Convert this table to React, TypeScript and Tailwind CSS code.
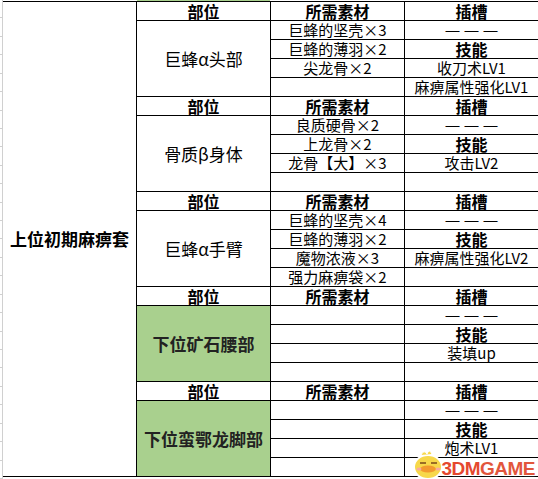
import * as React from "react"

type Group = {
  name: string
  green: boolean
  mats: string[]
  slots: string[]
}

const groups: Group[] = [
  {
    name: "巨蜂α头部",
    green: false,
    mats: ["巨蜂的坚壳×3", "巨蜂的薄羽×2", "尖龙骨×2", ""],
    slots: ["———", "技能", "收刀术LV1", "麻痹属性强化LV1"],
  },
  {
    name: "骨质β身体",
    green: false,
    mats: ["良质硬骨×2", "上龙骨×2", "龙骨【大】×3", ""],
    slots: ["———", "技能", "攻击LV2", ""],
  },
  {
    name: "巨蜂α手臂",
    green: false,
    mats: ["巨蜂的坚壳×4", "巨蜂的薄羽×2", "魔物浓液×3", "强力麻痹袋×2"],
    slots: ["———", "技能", "麻痹属性强化LV2", ""],
  },
  {
    name: "下位矿石腰部",
    green: true,
    mats: ["", "", "", ""],
    slots: ["———", "技能", "装填up", ""],
  },
  {
    name: "下位蛮鄂龙脚部",
    green: true,
    mats: ["", "", "", ""],
    slots: ["———", "技能", "炮术LV1", ""],
  },
]

const cell = "flex items-center justify-center whitespace-nowrap leading-[18px]"

function Dashes({ text }: { text: string }) {
  return (
    <div className={`${cell} bg-white gap-[5px] font-['Liberation_Sans',sans-serif] text-[14px]`}>
      {text.split("").map((d, i) => (
        <span key={i}>{d}</span>
      ))}
    </div>
  )
}

function Watermark() {
  return (
    <div className="absolute right-[3px] bottom-0 flex items-end pointer-events-none">
      {/* mascot chick */}
      <svg width="34" height="34" viewBox="0 0 34 34" className="mb-[-2px] mr-[-4px]">
        <ellipse cx="17" cy="20" rx="14" ry="12" fill="#f7d84a" stroke="#fff" strokeWidth="2" />
        <path d="M10 8 Q13 2 16 7 Q18 1 21 7" fill="#f7d84a" stroke="#fff" strokeWidth="1" />
        <path d="M9 16 L15 16" stroke="#7a4a1a" strokeWidth="1.5" />
        <path d="M20 16 L26 16" stroke="#7a4a1a" strokeWidth="1.5" />
        <ellipse cx="17" cy="22" rx="8" ry="3.5" fill="#f29a2e" />
        <ellipse cx="8" cy="22" rx="2.5" ry="1.6" fill="#f7a9a0" />
        <ellipse cx="27" cy="22" rx="2.5" ry="1.6" fill="#f7a9a0" />
      </svg>
      <span className="font-['Liberation_Sans',Arial,sans-serif] font-bold text-[19px] leading-[20px] tracking-[-0.5px] text-[#e5482e] [text-shadow:0_0_2px_#fff,0_0_2px_#fff]">
        3DM<span className="text-[#e2563c]">GAME</span>
      </span>
    </div>
  )
}

export default function App() {
  return (
    <div className="relative w-[538px] h-[479px] bg-white overflow-hidden flex font-['Noto_Sans_CJK_SC','Noto_Sans',sans-serif] text-black">
      {/* neighbouring spreadsheet column */}
      <div className="w-[3px] flex flex-col">
        {Array.from({ length: 26 }).map((_, i) => (
          <div key={i} className="h-[19px] w-[3px] border-b border-r border-[#d0d0d0]" />
        ))}
      </div>

      <div className="flex flex-col">
        <div className="h-px flex">
          <div className="w-[134px]" />
          <div className="w-[133px] bg-[#a9d08e]" />
        </div>

        <div className="grid grid-cols-[repeat(4,133px)] grid-rows-[repeat(25,18px)] gap-px bg-black py-px">
          <div className={`${cell} bg-white row-span-25 text-[17px] font-bold`}>上位初期麻痹套</div>

          {groups.map((g) => (
            <React.Fragment key={g.name}>
              <div className={`${cell} bg-white text-[16px] font-bold`}>部位</div>
              <div className={`${cell} bg-white text-[16px] font-bold`}>所需素材</div>
              <div className={`${cell} bg-white text-[16px] font-bold`}>插槽</div>

              <div
                className={`${cell} row-span-4 text-[17px] ${
                  g.green ? "bg-[#a9d08e] font-bold text-[#222]" : "bg-white"
                }`}
              >
                {g.name}
              </div>

              {g.mats.map((m, i) => (
                <React.Fragment key={i}>
                  <div className={`${cell} bg-white text-[15px]`}>{m}</div>
                  {i === 0 ? (
                    <Dashes text={g.slots[i]} />
                  ) : (
                    <div
                      className={`${cell} bg-white ${
                        i === 1 ? "text-[16px] font-bold" : "text-[15px]"
                      }`}
                    >
                      {g.slots[i]}
                    </div>
                  )}
                </React.Fragment>
              ))}
            </React.Fragment>
          ))}
        </div>
      </div>

      <Watermark />
    </div>
  )
}
